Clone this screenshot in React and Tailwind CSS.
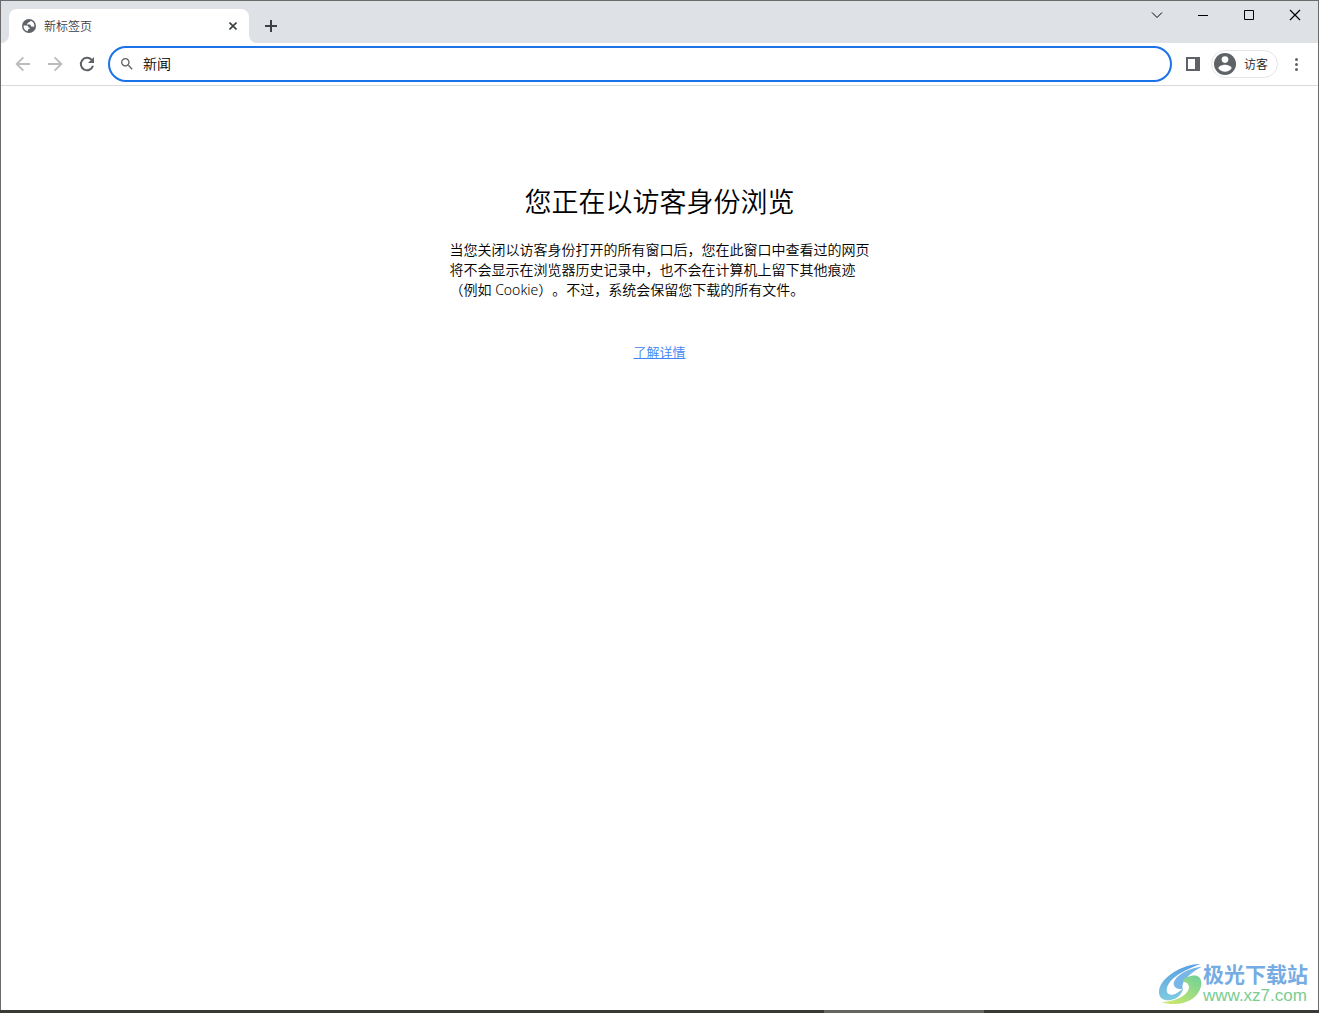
import React from 'react';

const WindowButton = ({ label, children }) => (
  <button type="button" aria-label={label} className="flex h-7 w-[46px] items-center justify-center">
    <svg width="12" height="12" viewBox="0 0 12 12" fill="none" stroke="#000">
      {children}
    </svg>
  </button>
);

const ToolButton = ({ label, color, children }) => (
  <button
    type="button"
    aria-label={label}
    className={`flex h-8 w-8 shrink-0 items-center justify-center ${color}`}
  >
    <svg width="16" height="16" viewBox="0 0 16 16" fill="none" stroke="currentColor" strokeWidth="1.9">
      {children}
    </svg>
  </button>
);

const GlobeIcon = () => (
  <svg width="14" height="14" viewBox="0 0 14 14" className="shrink-0">
    <circle cx="7" cy="7" r="7" fill="#5f6368" />
    <path
      d="M8.4 1.8 C8.6 2.8 7.6 3.2 6.4 3.3 C6.4 4.2 5.8 4.6 4.9 4.6 L4.9 5.6 L7.8 5.6 C8.6 5.7 8.8 6.3 8.9 7.4 L10.6 7.5 C11 8 11.6 7.6 12.3 7.4 A5.4 5.4 0 0 0 8.4 1.8 Z M1.6 6.5 L4.8 6.5 C6 6.6 6.5 7.4 6.5 8.6 L7.8 8.8 C8 10 7 10.2 6.1 10.2 L5.8 12.2 A5.4 5.4 0 0 1 1.6 6.5 Z"
      fill="#fff"
    />
  </svg>
);

const TabStrip = () => (
  <div className="flex h-[42px] items-start bg-[#dee1e6]">
    <div className="flex h-full items-end">
      <div className="h-2 w-2 bg-white">
        <div className="h-2 w-2 rounded-br-lg bg-[#dee1e6]" />
      </div>
      <div className="flex h-[34px] w-60 items-center rounded-t-lg bg-white pr-2 pl-[13px]">
        <GlobeIcon />
        <span className="ml-2 flex-1 pt-px text-xs font-[350] text-[#3c4043]">新标签页</span>
        <button type="button" aria-label="关闭标签页" className="flex h-4 w-4 items-center justify-center">
          <svg width="8" height="8" viewBox="0 0 8 8" stroke="#3c4043" strokeWidth="1.6">
            <path d="M0.5 0.5L7.5 7.5M7.5 0.5L0.5 7.5" />
          </svg>
        </button>
      </div>
      <div className="h-2 w-2 bg-white">
        <div className="h-2 w-2 rounded-bl-lg bg-[#dee1e6]" />
      </div>
      <button type="button" aria-label="新标签页" className="flex h-[34px] w-7 items-center justify-center">
        <svg width="12" height="12" viewBox="0 0 12 12" stroke="#3c4043" strokeWidth="2">
          <path d="M6 0V12M0 6H12" />
        </svg>
      </button>
    </div>
    <div className="ml-auto flex">
      <WindowButton label="搜索标签页">
        <path d="M1 3.5L6 8.5L11 3.5" />
      </WindowButton>
      <WindowButton label="最小化">
        <path d="M1 6.5H11" />
      </WindowButton>
      <WindowButton label="最大化">
        <path d="M1.5 1.5H10.5V10.5H1.5Z" />
      </WindowButton>
      <WindowButton label="关闭">
        <path d="M1 1L11 11M11 1L1 11" strokeWidth="1.2" />
      </WindowButton>
    </div>
  </div>
);

const Toolbar = () => (
  <div className="flex h-[43px] items-center border-b border-[#d9dadc] bg-white px-[6px]">
    <ToolButton label="后退" color="text-[#babcbe]">
      <path d="M15 8H2.4M8.3 1.4L1.7 8L8.3 14.6" />
    </ToolButton>
    <ToolButton label="前进" color="text-[#babcbe]">
      <path d="M1 8H13.6M7.7 1.4L14.3 8L7.7 14.6" />
    </ToolButton>
    <ToolButton label="重新加载" color="text-[#5f6368]">
      <path d="M14 9.8A6.2 6.2 0 1 1 12.6 3.8" strokeWidth="2" />
      <path d="M15 1V7H9Z" fill="currentColor" stroke="none" />
    </ToolButton>
    <form
      className="ml-[5px] flex h-9 flex-1 items-center rounded-full border-2 border-[#1a73e8] pl-[9px]"
      onSubmit={(e) => e.preventDefault()}
    >
      <svg width="16" height="16" viewBox="0 0 24 24" fill="#5f6368" className="shrink-0">
        <path d="M15.5 14h-.79l-.28-.27C15.41 12.59 16 11.11 16 9.5 16 5.91 13.09 3 9.5 3S3 5.91 3 9.5 5.91 16 9.5 16c1.61 0 3.09-.59 4.23-1.57l.27.28v.79l5 4.99L20.49 19l-4.99-5zm-6 0C7.01 14 5 11.99 5 9.5S7.01 5 9.5 5 14 7.01 14 9.5 11.99 14 9.5 14z" />
      </svg>
      <input
        type="text"
        aria-label="地址和搜索栏"
        defaultValue="新闻"
        className="mr-4 ml-2 min-w-0 flex-1 bg-transparent text-sm font-[350] text-black outline-none"
      />
    </form>
    <button type="button" aria-label="侧边栏" className="ml-[5px] flex h-8 w-8 shrink-0 items-center justify-center">
      <svg width="14" height="14" viewBox="0 0 14 14">
        <path d="M0 0H14V14H0ZM2 2V12H9V2Z" fill="#5f6368" fillRule="evenodd" />
      </svg>
    </button>
    <button
      type="button"
      className="ml-[2px] flex h-7 shrink-0 items-center rounded-full border border-[#e4e5e7] pr-[9px] pl-[2px]"
    >
      <svg width="22" height="22" viewBox="0 0 22 22">
        <circle cx="11" cy="11" r="11" fill="#5f6368" />
        <circle cx="11" cy="6.6" r="3.3" fill="#fff" />
        <path d="M4.4 15.2C4.4 13 8.8 11.8 11 11.8S17.6 13 17.6 15.2C16.2 17.4 13.8 18.7 11 18.7S5.8 17.4 4.4 15.2Z" fill="#fff" />
      </svg>
      <span className="ml-2 pt-px text-xs font-[350] text-[#202124]">访客</span>
    </button>
    <button type="button" aria-label="更多" className="ml-[2px] flex h-8 w-8 shrink-0 items-center justify-center">
      <svg width="3" height="13" viewBox="0 0 3 13" fill="#5f6368">
        <circle cx="1.5" cy="1.5" r="1.5" />
        <circle cx="1.5" cy="6.5" r="1.5" />
        <circle cx="1.5" cy="11.5" r="1.5" />
      </svg>
    </button>
  </div>
);

const SiteBadge = () => (
  <div className="absolute right-[10px] bottom-1 flex items-center">
    <svg width="46" height="44" viewBox="0 0 138 132">
      <defs>
        <linearGradient id="swirl" x1="0" y1="0" x2="0" y2="1">
          <stop offset="0" stopColor="#5b9fe4" />
          <stop offset="1" stopColor="#7fcbe0" />
        </linearGradient>
        <linearGradient id="leaf" x1="1" y1="0" x2="0.2" y2="1">
          <stop offset="0" stopColor="#6fcf9a" />
          <stop offset="1" stopColor="#c9e86c" />
        </linearGradient>
      </defs>
      <path d="M130 6C88 4 12 40 6 86C4 110 22 118 42 114C62 110 76 96 78 78C66 92 48 102 36 97C24 91 28 70 46 52C66 33 98 18 130 6Z" fill="url(#swirl)" />
      <path d="M134 14C96 18 56 38 50 64C50 78 64 84 77 80C74 68 80 56 94 42C104 32 118 23 134 14Z" fill="#78b6ea" />
      <path d="M76 60C84 44 106 38 121 42C139 50 137 82 114 104C90 126 44 132 14 121C50 119 80 106 92 88C101 72 94 60 76 60Z" fill="url(#leaf)" />
    </svg>
    <div className="flex flex-col">
      <span className="text-[21px] leading-6 font-bold text-[#75ace4]">极光下载站</span>
      <span className="font-['Liberation_Sans'] text-[17px] leading-5 text-[#79cd8f]">www.xz7.com</span>
    </div>
  </div>
);

const GuestPage = () => (
  <main className="relative flex flex-1 flex-col items-center bg-white pt-24 text-black">
    <h1 className="text-[27px] leading-10 font-[350]">您正在以访客身份浏览</h1>
    <p className="mt-[18px] w-[420px] font-['Noto_Sans','Noto_Sans_CJK_SC',sans-serif] text-sm leading-5 font-[350] [text-spacing-trim:space-all]">
      当您关闭以访客身份打开的所有窗口后，您在此窗口中查看过的网页将不会显示在浏览器历史记录中，也不会在计算机上留下其他痕迹（例如
      Cookie）。不过，系统会保留您下载的所有文件。
    </p>
    <a href="#learn-more" className="mt-[42px] text-[13px] leading-5 font-[350] text-[#4285f4] underline">
      了解详情
    </a>
    <SiteBadge />
  </main>
);

const App = () => (
  <div className="flex min-h-screen flex-col font-['Open_Sans','Noto_Sans_CJK_SC',sans-serif]">
    <div className="flex flex-1 flex-col border-x border-t border-[#6b6b6b]">
      <TabStrip />
      <Toolbar />
      <GuestPage />
    </div>
    <div className="flex h-[3px] bg-[#3a3935]">
      <div className="ml-[824px] w-40 bg-[#65645e]" />
    </div>
  </div>
);

export default App;
